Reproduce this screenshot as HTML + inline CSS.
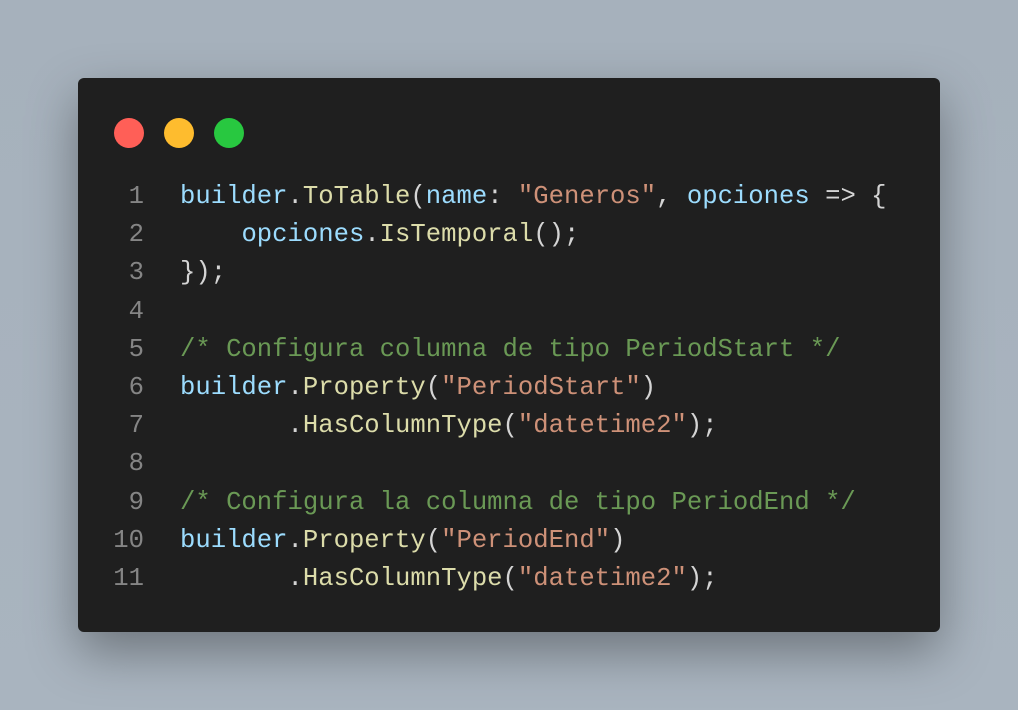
<!DOCTYPE html>
<html><head><style>
html,body{margin:0;padding:0;}
body{width:1018px;height:710px;background:linear-gradient(180deg,#a6b1bc,#a9b4bf);position:relative;overflow:hidden;}
.win{position:absolute;left:78px;top:78px;width:862px;height:554px;background:#1f1f1f;border-radius:6px;box-shadow:0 20px 50px rgba(0,0,0,0.35);}
.dot{position:absolute;top:40px;width:30px;height:30px;border-radius:50%;}
.code{position:absolute;left:0;top:100px;font-family:"Liberation Mono",monospace;font-size:25.6px;line-height:38.2px;color:#d4d4d4;white-space:pre;}
.ln{display:inline-block;width:66px;text-align:right;color:#858585;margin-right:36px;}
.v{color:#9cdcfe}.f{color:#dcdcaa}.s{color:#ce9178}.c{color:#6a9955}
</style></head><body>
<div class="win">
<div class="dot" style="left:36px;background:#ff5f57"></div>
<div class="dot" style="left:86px;background:#febc2e"></div>
<div class="dot" style="left:136px;background:#28c840"></div>
<div class="code"><div><span class="ln">1</span><span class="v">builder</span>.<span class="f">ToTable</span>(<span class="v">name</span>: <span class="s">"Generos"</span>, <span class="v">opciones</span> =&gt; {</div><div><span class="ln">2</span>    <span class="v">opciones</span>.<span class="f">IsTemporal</span>();</div><div><span class="ln">3</span>});</div><div><span class="ln">4</span></div><div><span class="ln">5</span><span class="c">/* Configura columna de tipo PeriodStart */</span></div><div><span class="ln">6</span><span class="v">builder</span>.<span class="f">Property</span>(<span class="s">"PeriodStart"</span>)</div><div><span class="ln">7</span>       .<span class="f">HasColumnType</span>(<span class="s">"datetime2"</span>);</div><div><span class="ln">8</span></div><div><span class="ln">9</span><span class="c">/* Configura la columna de tipo PeriodEnd */</span></div><div><span class="ln">10</span><span class="v">builder</span>.<span class="f">Property</span>(<span class="s">"PeriodEnd"</span>)</div><div><span class="ln">11</span>       .<span class="f">HasColumnType</span>(<span class="s">"datetime2"</span>);</div></div>
</div>
</body></html>
